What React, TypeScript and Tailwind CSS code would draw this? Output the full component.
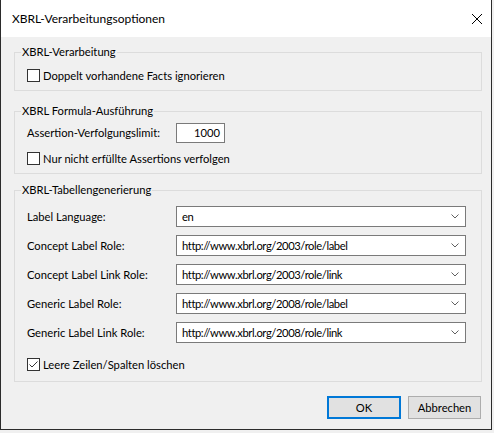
import React from "react";

function CheckBox({ checked }: { checked?: boolean }) {
  return (
    <span className="w-[13px] h-[13px] border border-[#333333] bg-white flex items-center justify-center shrink-0">
      {checked && (
        <svg width="11" height="11" viewBox="0 0 11 11">
          <path d="M1.5 5.5 L4 8 L9.5 2.5" stroke="#333333" strokeWidth="1" fill="none" />
        </svg>
      )}
    </span>
  );
}

function Select({ value }: { value: string }) {
  return (
    <div className="w-[290px] h-[21px] border border-[#7a7a7a] bg-white flex items-center justify-between pl-[5px] pr-[6px]">
      <span className="leading-[14px] tracking-[-0.4px]">{value}</span>
      <svg width="8" height="5" viewBox="0 0 8 5">
        <path d="M0.5 0.5 L4 4 L7.5 0.5" stroke="#606060" strokeWidth="1" fill="none" />
      </svg>
    </div>
  );
}

function SelectRow({ label, value }: { label: string; value: string }) {
  return (
    <div className="flex items-center">
      <span className="w-[149px] shrink-0 leading-[14px]">{label}</span>
      <Select value={value} />
    </div>
  );
}

export default function App() {
  return (
    <div className="w-[494px] h-[433px] bg-[#f0f0f0] text-[11.2px] text-black font-['Lato','Liberation_Sans',sans-serif]">
      <div className="w-[492px] h-[430px] border-l border-r border-b border-[#2b2b2b] flex flex-col">
        <div className="h-[37px] shrink-0 bg-white flex items-center justify-between pl-[11px] pr-[9px]">
          <span className="text-[12px] leading-[16px]">XBRL-Verarbeitungsoptionen</span>
          <svg width="10" height="10" viewBox="0 0 10 10">
            <path d="M0 0 L10 10 M10 0 L0 10" stroke="#000000" strokeWidth="1" fill="none" />
          </svg>
        </div>
        <div className="flex-1 pl-[13px] pt-[8px] flex flex-col">
          <fieldset className="w-[468px] border border-[#dcdcdc]">
            <legend className="ml-[6px] px-[1px] leading-[14px]">XBRL-Verarbeitung</legend>
            <div className="pl-[12px] pt-[10px] pb-[8px]">
              <div className="flex items-center gap-[3px] h-[13px]">
                <CheckBox />
                <span className="leading-[14px]">Doppelt vorhandene Facts ignorieren</span>
              </div>
            </div>
          </fieldset>

          <fieldset className="w-[468px] border border-[#dcdcdc] mt-[13px]">
            <legend className="ml-[6px] px-[1px] leading-[14px]">XBRL Formula-Ausführung</legend>
            <div className="pl-[12px] pt-[5px] pb-[8px] flex flex-col">
              <div className="flex items-center">
                <span className="w-[149px] shrink-0 leading-[14px]">Assertion-Verfolgungslimit:</span>
                <div className="w-[49px] h-[20px] border border-[#7a7a7a] bg-white flex items-center justify-end pr-[4px]">
                  <span className="leading-[14px]">1000</span>
                </div>
              </div>
              <div className="flex items-center gap-[3px] h-[13px] mt-[9px]">
                <CheckBox />
                <span className="leading-[14px]">Nur nicht erfüllte Assertions verfolgen</span>
              </div>
            </div>
          </fieldset>

          <fieldset className="w-[468px] border border-[#dcdcdc] mt-[9px]">
            <legend className="ml-[6px] px-[1px] leading-[14px]">XBRL-Tabellengenerierung</legend>
            <div className="pl-[12px] pt-[9px] pb-[10px] flex flex-col">
              <div className="flex flex-col gap-[8px]">
                <SelectRow label="Label Language:" value="en" />
                <SelectRow label="Concept Label Role:" value="http://www.xbrl.org/2003/role/label" />
                <SelectRow label="Concept Label Link Role:" value="http://www.xbrl.org/2003/role/link" />
                <SelectRow label="Generic Label Role:" value="http://www.xbrl.org/2008/role/label" />
                <SelectRow label="Generic Label Link Role:" value="http://www.xbrl.org/2008/role/link" />
              </div>
              <div className="flex items-center gap-[3px] h-[13px] mt-[15px]">
                <CheckBox checked />
                <span className="leading-[14px]">Leere Zeilen/Spalten löschen</span>
              </div>
            </div>
          </fieldset>

          <div className="w-[468px] flex justify-end gap-[7px] pr-[1px] mt-[14px]">
            <button className="w-[74px] h-[23px] border-2 border-[#0078d7] bg-[#e1e1e1] flex items-center justify-center leading-[14px]">
              OK
            </button>
            <button className="w-[73px] h-[23px] border border-[#adadad] bg-[#e1e1e1] flex items-center justify-center leading-[14px]">
              Abbrechen
            </button>
          </div>
        </div>
      </div>
    </div>
  );
}
